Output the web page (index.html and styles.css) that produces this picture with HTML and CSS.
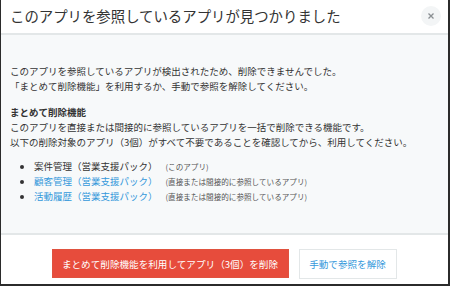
FILE: index.html
```html
<!DOCTYPE html>
<html lang="ja">
<head>
<meta charset="utf-8">
<link rel="stylesheet" href="styles.css">
</head>
<body>
<div class="dialog">
  <div class="header">
    <h1 class="title">このアプリを参照しているアプリが見つかりました</h1>
    <button class="close" aria-label="閉じる">
      <svg width="8" height="8" viewBox="0 0 8 8"><path d="M1.5 1.5 L6.5 6.5 M6.5 1.5 L1.5 6.5" stroke="#8a8f92" stroke-width="1.3" fill="none"/></svg>
    </button>
  </div>
  <div class="content">
    <p class="para">このアプリを参照しているアプリが検出されたため、削除できませんでした。<br>「まとめて削除機能」を利用するか、手動で参照を解除してください。</p>
    <h2 class="heading">まとめて削除機能</h2>
    <p class="para">このアプリを直接または間接的に参照しているアプリを一括で削除できる機能です。<br>以下の削除対象のアプリ（3個）がすべて不要であることを確認してから、利用してください。</p>
    <ul class="apps">
      <li><span class="name">案件管理（営業支援パック）</span><span class="note">(このアプリ)</span></li>
      <li><a class="name link">顧客管理（営業支援パック）</a><span class="note">(直接または間接的に参照しているアプリ)</span></li>
      <li><a class="name link">活動履歴（営業支援パック）</a><span class="note">(直接または間接的に参照しているアプリ)</span></li>
    </ul>
  </div>
  <div class="footer">
    <button class="btn btn-danger">まとめて削除機能を利用してアプリ（3個）を削除</button>
    <button class="btn btn-plain">手動で参照を解除</button>
  </div>
</div>
</body>
</html>
```
FILE: styles.css
```css
* { box-sizing: border-box; }
html, body { margin: 0; padding: 0; }
body {
  width: 450px;
  height: 286px;
  font-family: "Noto Sans CJK JP", "Noto Sans", sans-serif;
  color: #333;
  background: #fff;
}
.dialog {
  width: 450px;
  height: 286px;
  border-left: 1px solid #2b2b2b;
  border-right: 2px solid #2b2b2b;
  border-bottom: 2px solid #2b2b2b;
  display: flex;
  flex-direction: column;
  background: #fff;
}
.header {
  height: 35px;
  border-bottom: 2px solid #e3e7e8;
  display: flex;
  align-items: center;
  justify-content: space-between;
  padding: 0 7px 2px 9px;
}
.title {
  margin: 0;
  font-size: 14.4px;
  font-weight: normal;
  color: #333;
  line-height: 20px;
}
.close {
  width: 20px;
  height: 20px;
  border-radius: 50%;
  border: none;
  background: #f3f5f6;
  padding: 0;
  display: flex;
  align-items: center;
  justify-content: center;
}
.content {
  height: 200px;
  background: #f7f9fa;
  border-bottom: 2px solid #e3e7e8;
  padding: 29px 10px 0 9px;
  font-size: 9.5px;
  line-height: 15px;
}
.para { margin: 0; }
.heading {
  margin: 11px 0 0;
  font-size: 9.5px;
  font-weight: bold;
  line-height: 15px;
}
.apps {
  margin: 9px 0 0;
  padding-left: 24px;
  list-style: disc;
}
.apps li { line-height: 15px; }
.name { font-size: 9.5px; }
.link { color: #3498db; text-decoration: none; }
.note {
  font-size: 7.6px;
  color: #555;
  margin-left: 8px;
}
.footer {
  flex: 1;
  display: flex;
  justify-content: center;
  align-items: flex-start;
  gap: 10px;
  padding-top: 14px;
  padding-right: 1px;
}
.btn {
  font-family: inherit;
  font-size: 9.6px;
  height: 29px;
  padding: 0 9px;
  cursor: pointer;
}
.btn-danger {
  width: 237px;
  background: #e74c3c;
  border: 1px solid #e0523f;
  color: #fff;
}
.btn-plain {
  width: 98px;
  height: 30px;
  background: #fff;
  border: 1px solid #e3e7e8;
  color: #3498db;
}
```
